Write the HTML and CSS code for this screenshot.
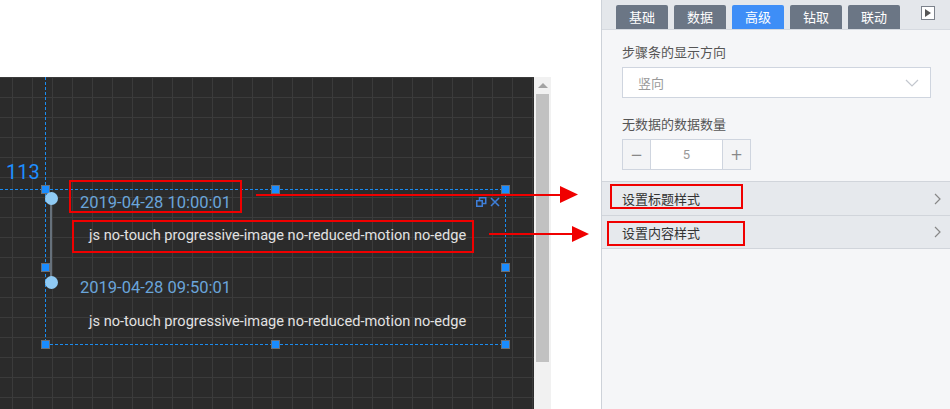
FILE: index.html
```html
<!DOCTYPE html>
<html lang="zh">
<head>
<meta charset="utf-8">
<title>步骤条设置</title>
<link rel="stylesheet" href="styles.css">
</head>
<body>
<div class="app">
  <div class="stage">
    <div class="stage-top"></div>
    <div class="stage-main">
      <div class="canvas">
        <div class="guide guide-v"></div>
        <div class="guide guide-h"></div>
        <div class="coord">113</div>
        <div class="widget">
          <div class="step">
            <span class="dot"></span>
            <div class="step-date">2019-04-28 10:00:01</div>
            <div class="step-text">js no-touch progressive-image no-reduced-motion no-edge</div>
          </div>
          <div class="step last">
            <span class="dot"></span>
            <div class="step-date">2019-04-28 09:50:01</div>
            <div class="step-text">js no-touch progressive-image no-reduced-motion no-edge</div>
          </div>
          <div class="widget-tools">
            <svg width="11" height="10" viewBox="0 0 11 10"><rect x="0.75" y="3.75" width="5.5" height="5.5" fill="none" stroke="#3f7fd9" stroke-width="1.5"/><path d="M3.5 3.5V0.75H9.75V6.5H6.5" fill="none" stroke="#3f7fd9" stroke-width="1.5"/></svg>
            <svg width="10" height="10" viewBox="0 0 10 10"><path d="M1 1L9 9M9 1L1 9" stroke="#3f7fd9" stroke-width="1.6"/></svg>
          </div>
          <span class="h h-tl"></span><span class="h h-tm"></span><span class="h h-tr"></span>
          <span class="h h-ml"></span><span class="h h-mr"></span>
          <span class="h h-bl"></span><span class="h h-bm"></span><span class="h h-br"></span>
        </div>
      </div>
      <div class="vscroll">
        <span class="vs-up"></span>
        <span class="vs-thumb"></span>
      </div>
      <div class="gap"></div>
    </div>
  </div>
  <div class="panel">
    <div class="tabs">
      <span class="tab">基础</span>
      <span class="tab">数据</span>
      <span class="tab active">高级</span>
      <span class="tab">钻取</span>
      <span class="tab">联动</span>
      <span class="toggle"><svg width="6" height="8" viewBox="0 0 6 8"><path d="M0 0L6 4L0 8Z" fill="#555"/></svg></span>
    </div>
    <div class="panel-body">
      <div class="label">步骤条的显示方向</div>
      <div class="select">
        <span>竖向</span>
        <svg width="14" height="8" viewBox="0 0 14 8"><path d="M1 1L7 7L13 1" fill="none" stroke="#c3c7ce" stroke-width="1.2"/></svg>
      </div>
      <div class="label label-2">无数据的数据数量</div>
      <div class="number">
        <span class="num-btn">−</span>
        <span class="num-val">5</span>
        <span class="num-btn">+</span>
      </div>
    </div>
    <div class="row">
      <span>设置标题样式</span>
      <svg width="7" height="12" viewBox="0 0 7 12"><path d="M1 1L6 6L1 11" fill="none" stroke="#888" stroke-width="1.2"/></svg>
    </div>
    <div class="row">
      <span>设置内容样式</span>
      <svg width="7" height="12" viewBox="0 0 7 12"><path d="M1 1L6 6L1 11" fill="none" stroke="#888" stroke-width="1.2"/></svg>
    </div>
    <div class="panel-rest"></div>
  </div>
</div>
<svg class="annot" width="950" height="409" viewBox="0 0 950 409">
  <g fill="none" stroke="#f00000" stroke-width="2">
    <rect x="70" y="181" width="171" height="31"/>
    <rect x="73" y="221" width="400" height="31"/>
    <rect x="611" y="185" width="131" height="23"/>
    <rect x="608" y="222" width="136" height="23"/>
    <line x1="256" y1="195" x2="562" y2="195"/>
    <line x1="489" y1="234" x2="574" y2="234"/>
  </g>
  <g fill="#f00000">
    <polygon points="560,186 578,194.5 560,203"/>
    <polygon points="572,226 589,234 572,242"/>
  </g>
</svg>
</body>
</html>
```
FILE: styles.css
```css
* { box-sizing: border-box; }
html, body { margin: 0; padding: 0; }
body {
  width: 950px;
  height: 409px;
  overflow: hidden;
  position: relative;
  background: #fff;
  font-family: Roboto, "Noto Sans CJK SC", sans-serif;
}
.app { display: flex; width: 950px; height: 409px; }

/* left stage */
.stage { width: 601px; display: flex; flex-direction: column; }
.stage-top { height: 77px; background: #fff; }
.stage-main { flex: 1; display: flex; }
.canvas {
  position: relative;
  width: 534px;
  height: 332px;
  background-color: #2b2b2b;
  background-image:
    linear-gradient(#3b3b3b 1px, transparent 1px),
    linear-gradient(90deg, #3b3b3b 1px, transparent 1px);
  background-size: 20px 20px;
  background-position: 12px 0;
  overflow: hidden;
}
.vscroll { position: relative; width: 17px; background: #f1f1f1; }
.vs-up {
  position: absolute; left: 4px; top: 6px;
  width: 0; height: 0;
  border-left: 5px solid transparent; border-right: 5px solid transparent;
  border-bottom: 5px solid #a3a3a3;
}
.vs-thumb {
  position: absolute; left: 2px; top: 17px;
  width: 13px; height: 268px; background: #c1c1c1;
}
.gap { flex: 1; background: #fff; }

.guide { position: absolute; }
.guide-v {
  left: 45px; top: 0; width: 1px; height: 112px;
  background: repeating-linear-gradient(180deg, #1b8cf0 0 3px, transparent 3px 5px);
}
.guide-h {
  left: 0; top: 112px; width: 45px; height: 1px;
  background: repeating-linear-gradient(90deg, #1b8cf0 0 3px, transparent 3px 5px);
}
.coord {
  position: absolute; left: 6px; top: 83px;
  font-size: 20px; line-height: 24px; color: #1e8fff;
}

.widget {
  position: absolute; left: 45px; top: 112px;
  width: 461px; height: 156px;
  padding: 1px;
  background:
    repeating-linear-gradient(90deg, #1b8cf0 0 3px, transparent 3px 5px) top left / 100% 1px no-repeat,
    repeating-linear-gradient(90deg, #1b8cf0 0 3px, transparent 3px 5px) bottom left / 100% 1px no-repeat,
    repeating-linear-gradient(180deg, #1b8cf0 0 3px, transparent 3px 5px) top left / 1px 100% no-repeat,
    repeating-linear-gradient(180deg, #1b8cf0 0 3px, transparent 3px 5px) top right / 1px 100% no-repeat;
}
.step { position: relative; height: 85px; padding-left: 35px; margin-top: -1px; margin-left: -1px; }
.step.last { height: auto; padding-top: 1px; }
.dot {
  position: absolute; left: 0; top: 3px;
  width: 13px; height: 13px; border-radius: 50%;
  background: #8fcaf4; z-index: 1;
}
.step::before {
  content: ""; position: absolute; left: 5px; top: 9px;
  width: 2px; height: 85px; background: #66717c;
}
.step.last::before { display: none; }
.step-date {
  font-size: 16.5px; line-height: 27px; color: #6aa5da; white-space: nowrap;
}
.step-text {
  margin-top: 8px; padding-left: 9px;
  font-size: 14.6px; line-height: 22px; color: #e2e2e2; white-space: nowrap;
}
.step.last .step-text { margin-top: 9px; }
.widget-tools {
  position: absolute; right: 6px; top: 8px;
  display: flex; gap: 3px; align-items: center;
}
.h {
  position: absolute; width: 9px; height: 9px;
  background: #1a8cff; border: 1px solid #6a6f76;
}
.h-tl { left: -4px; top: -4px; }
.h-tm { left: 226px; top: -4px; }
.h-tr { right: -4px; top: -4px; }
.h-ml { left: -4px; top: 74px; }
.h-mr { right: -4px; top: 74px; }
.h-bl { left: -4px; bottom: -4px; }
.h-bm { left: 226px; bottom: -4px; }
.h-br { right: -4px; bottom: -4px; }

/* right panel */
.panel {
  flex: 1; display: flex; flex-direction: column;
  background: #f5f6f8;
  border-left: 1px solid #cdd2d9;
  font-family: "Noto Sans CJK SC", sans-serif;
}
.tabs {
  height: 30px; display: flex; align-items: flex-end; gap: 6px;
  padding-left: 14px;
  background: #e4e7eb;
  border-bottom: 1px solid #d6dae0;
}
.tab {
  width: 52px; height: 24px; line-height: 24px;
  text-align: center; color: #fff; font-size: 13px;
  background: #6b7685; border-radius: 2px 2px 0 0;
}
.tab.active { background: #3e8ef7; }
.toggle {
  align-self: flex-start; margin: 6px 0 0 15px;
  width: 14px; height: 14px;
  border: 1px solid #7c828b; background: #fff;
  display: flex; align-items: center; justify-content: center;
}
.panel-body { padding: 12px 19px 11px 20px; }
.label { font-size: 13px; line-height: 20px; color: #555; }
.label-2 { margin-top: 16px; }
.select {
  margin-top: 5px; height: 31px;
  border: 1px solid #cfd5df; background: #fff;
  display: flex; align-items: center; justify-content: space-between;
  padding: 0 11px 0 15px;
  font-size: 13px; color: #9a9a9a;
}
.number {
  margin-top: 5px; width: 129px; height: 31px;
  display: flex; border: 1px solid #cfd5df; background: #fff;
}
.num-btn {
  width: 28px; display: flex; align-items: center; justify-content: center;
  background: #f3f4f6; color: #888; font-size: 15px;
  font-family: "DejaVu Sans", sans-serif;
}
.num-btn:first-child { border-right: 1px solid #cfd5df; }
.num-btn:last-child { border-left: 1px solid #cfd5df; }
.num-val {
  flex: 1; display: flex; align-items: center; justify-content: center;
  font-size: 13px; color: #999; font-family: Roboto, sans-serif;
}
.row {
  height: 34px; display: flex; align-items: center; justify-content: space-between;
  padding: 0 9px 0 20px;
  background: #e6e9ed;
  border-top: 1px solid #d1d5db;
  font-size: 13px; color: #333;
}
.row + .row { border-bottom: 1px solid #d1d5db; }
.panel-rest { flex: 1; background: #f5f6f8; }

.annot { position: absolute; left: 0; top: 0; pointer-events: none; }
```
